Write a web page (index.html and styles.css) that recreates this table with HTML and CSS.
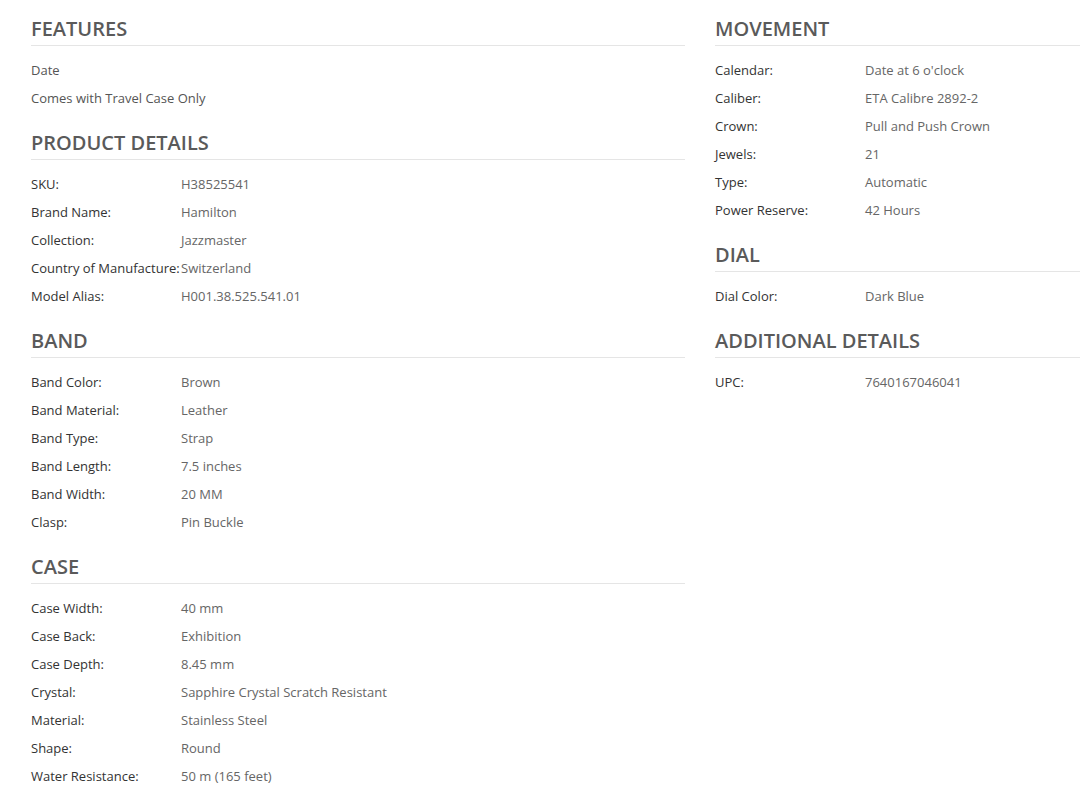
FILE: index.html
```html
<!DOCTYPE html>
<html lang="en">
<head>
    <meta charset="UTF-8">
    <meta name="viewport" content="width=device-width, initial-scale=1.0">
    <title>Specifications</title>
    <link rel="stylesheet" href="styles.css">
</head>
<body>
    <div class="specs">
        <div class="spec-col">
            <div class="spec-section">
                <h2>Features</h2>
                <div class="spec-list">
                    <div class="spec-row">Date</div>
                    <div class="spec-row">Comes with Travel Case Only</div>
                </div>
            </div>

            <div class="spec-section">
                <h2>Product Details</h2>
                <div class="spec-list">
                    <div class="spec-row"><span class="label">SKU:</span><span class="value">H38525541</span></div>
                    <div class="spec-row"><span class="label">Brand Name:</span><span class="value">Hamilton</span></div>
                    <div class="spec-row"><span class="label">Collection:</span><span class="value">Jazzmaster</span></div>
                    <div class="spec-row"><span class="label">Country of Manufacture:</span><span class="value">Switzerland</span></div>
                    <div class="spec-row"><span class="label">Model Alias:</span><span class="value">H001.38.525.541.01</span></div>
                </div>
            </div>

            <div class="spec-section">
                <h2>Band</h2>
                <div class="spec-list">
                    <div class="spec-row"><span class="label">Band Color:</span><span class="value">Brown</span></div>
                    <div class="spec-row"><span class="label">Band Material:</span><span class="value">Leather</span></div>
                    <div class="spec-row"><span class="label">Band Type:</span><span class="value">Strap</span></div>
                    <div class="spec-row"><span class="label">Band Length:</span><span class="value">7.5 inches</span></div>
                    <div class="spec-row"><span class="label">Band Width:</span><span class="value">20 MM</span></div>
                    <div class="spec-row"><span class="label">Clasp:</span><span class="value">Pin Buckle</span></div>
                </div>
            </div>

            <div class="spec-section">
                <h2>Case</h2>
                <div class="spec-list">
                    <div class="spec-row"><span class="label">Case Width:</span><span class="value">40 mm</span></div>
                    <div class="spec-row"><span class="label">Case Back:</span><span class="value">Exhibition</span></div>
                    <div class="spec-row"><span class="label">Case Depth:</span><span class="value">8.45 mm</span></div>
                    <div class="spec-row"><span class="label">Crystal:</span><span class="value">Sapphire Crystal Scratch Resistant</span></div>
                    <div class="spec-row"><span class="label">Material:</span><span class="value">Stainless Steel</span></div>
                    <div class="spec-row"><span class="label">Shape:</span><span class="value">Round</span></div>
                    <div class="spec-row"><span class="label">Water Resistance:</span><span class="value">50 m (165 feet)</span></div>
                </div>
            </div>
        </div>

        <div class="spec-col">
            <div class="spec-section">
                <h2>Movement</h2>
                <div class="spec-list">
                    <div class="spec-row"><span class="label">Calendar:</span><span class="value">Date at 6 o'clock</span></div>
                    <div class="spec-row"><span class="label">Caliber:</span><span class="value">ETA Calibre 2892-2</span></div>
                    <div class="spec-row"><span class="label">Crown:</span><span class="value">Pull and Push Crown</span></div>
                    <div class="spec-row"><span class="label">Jewels:</span><span class="value">21</span></div>
                    <div class="spec-row"><span class="label">Type:</span><span class="value">Automatic</span></div>
                    <div class="spec-row"><span class="label">Power Reserve:</span><span class="value">42 Hours</span></div>
                </div>
            </div>

            <div class="spec-section">
                <h2>Dial</h2>
                <div class="spec-list">
                    <div class="spec-row"><span class="label">Dial Color:</span><span class="value">Dark Blue</span></div>
                </div>
            </div>

            <div class="spec-section">
                <h2>Additional Details</h2>
                <div class="spec-list">
                    <div class="spec-row"><span class="label">UPC:</span><span class="value">7640167046041</span></div>
                </div>
            </div>
        </div>
    </div>
</body>
</html>
```

FILE: styles.css
```css
body {
    margin: 0;
    padding: 0;
    background: #fff;
    font-family: 'Open Sans', 'Liberation Sans', sans-serif;
    overflow: hidden;
}

.specs {
    display: flex;
    gap: 30px;
    padding: 16px 0 0 31px;
    width: 1400px;
}

.spec-col {
    flex: 0 0 654px;
}

.spec-section {
    margin-bottom: 18px;
}

.spec-section h2 {
    margin: 0;
    padding-bottom: 3px;
    font-size: 20px;
    line-height: 26px;
    font-weight: 600;
    text-transform: uppercase;
    color: #5a5a5a;
    border-bottom: 1px solid #e5e5e5;
}

.spec-list {
    margin-top: 10px;
}

.spec-row {
    display: flex;
    font-size: 13px;
    line-height: 28px;
    color: #555;
    white-space: nowrap;
}

.spec-row .label {
    flex: 0 0 auto;
    min-width: 150px;
    color: #333;
}

.spec-row .value {
    color: #666;
}
```
